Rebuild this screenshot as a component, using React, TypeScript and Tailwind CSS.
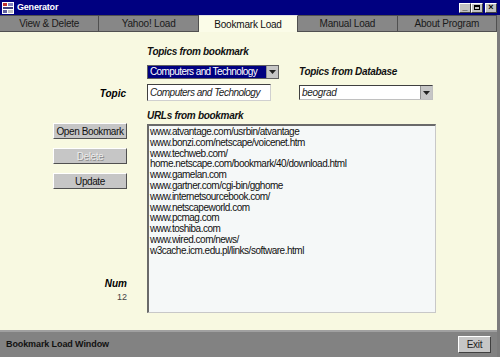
import React from "react";

const urls = [
  "www.atvantage.com/usrbin/atvantage",
  "www.bonzi.com/netscape/voicenet.htm",
  "www.techweb.com/",
  "home.netscape.com/bookmark/40/download.html",
  "www.gamelan.com",
  "www.gartner.com/cgi-bin/gghome",
  "www.internetsourcebook.com/",
  "www.netscapeworld.com",
  "www.pcmag.com",
  "www.toshiba.com",
  "www.wired.com/news/",
  "w3cache.icm.edu.pl/links/software.html",
];

const tabs = ["View & Delete", "Yahoo! Load", "Bookmark Load", "Manual Load", "About Program"];

function AppIcon() {
  return (
    <svg width="12" height="12" viewBox="0 0 12 12">
      <rect x="0" y="0" width="12" height="12" fill="#ffffff" />
      <rect x="1" y="1" width="4" height="3" fill="#c03030" />
      <rect x="6" y="1" width="5" height="3" fill="#8080c0" />
      <rect x="1" y="5" width="10" height="2" fill="#404080" />
      <rect x="1" y="8" width="4" height="3" fill="#6060a0" />
      <rect x="6" y="8" width="5" height="3" fill="#c0c0c0" />
    </svg>
  );
}

function WinButton({ children }: { children: React.ReactNode }) {
  return (
    <div className="w-[12px] h-[10px] bg-[#c0c0c0] border-t border-l border-white border-r border-b border-r-[#404040] border-b-[#404040] flex items-center justify-center text-[9px] leading-none font-bold text-black">
      {children}
    </div>
  );
}

function Button({ label, disabled }: { label: string; disabled?: boolean }) {
  return (
    <div
      className={`w-[74px] h-[16px] bg-[#c6c6c6] border border-t-white border-l-white border-r-[#505050] border-b-[#505050] flex items-center justify-center text-[10px] tracking-[-0.4px] whitespace-nowrap ${
        disabled ? "text-[#ececec] [text-shadow:1px_1px_0_#8a8a8a]" : "text-[#111]"
      }`}
    >
      {label}
    </div>
  );
}

function Arrow() {
  return (
    <div className="w-[12px] h-full bg-[#c6c6c6] border-l border-[#909090] flex items-center justify-center shrink-0">
      <svg width="7" height="4" viewBox="0 0 7 4">
        <path d="M0 0 L7 0 L3.5 4 Z" fill="#222" />
      </svg>
    </div>
  );
}

export default function App() {
  return (
    <div className="w-[500px] h-[357px] flex flex-col bg-[#f8f9e1] font-['Liberation_Sans',Arial,sans-serif] overflow-hidden">
      {/* Title bar */}
      <div className="h-[15px] bg-[#000080] flex items-center px-[2px] shrink-0">
        <AppIcon />
        <span className="ml-[3px] text-white text-[9px] font-bold leading-none tracking-[-0.2px]">Generator</span>
        <div className="ml-auto flex items-center mr-[1px]">
          <WinButton>_</WinButton>
          <WinButton>
            <span className="block w-[6px] h-[5px] border border-black border-t-2"></span>
          </WinButton>
          <div className="ml-[2px]">
            <WinButton>×</WinButton>
          </div>
        </div>
      </div>

      <div className="flex-1 flex flex-col border-r-[3px] border-[#7c7c7c]">
        {/* Tabs */}
        <div className="h-[17px] flex shrink-0 bg-[#808080]">
          {tabs.map((t) => (
            <div
              key={t}
              className={`flex-1 flex items-center justify-center text-[10px] tracking-[-0.2px] whitespace-nowrap border-t border-r border-[#505050] ${
                t === "Bookmark Load"
                  ? "bg-[#fbfce8] text-[#111] border-t-[#e0e0e0]"
                  : "bg-[#878787] text-[#1a1a1a] border-b"
              }`}
            >
              {t}
            </div>
          ))}
        </div>

        {/* Content */}
        <div className="flex-1 flex">
          {/* Left column */}
          <div className="w-[127px] flex flex-col items-end">
            <div className="mt-[56px] text-[10px] font-bold italic leading-[12px] mr-[1px]">Topic</div>
            <div className="mt-[23px] flex flex-col gap-[9px]">
              <Button label="Open Bookmark" />
              <Button label="Delete" disabled />
              <Button label="Update" />
            </div>
            <div className="mt-[89px] text-[10px] font-bold italic leading-[12px]">Num</div>
            <div className="mt-[1px] text-[9px] leading-[12px] text-[#444]">12</div>
          </div>

          {/* Middle */}
          <div className="ml-[20px] w-[289px] flex flex-col">
            <div className="flex">
              <div className="w-[132px] flex flex-col">
                <div className="mt-[14px] text-[10px] font-bold italic leading-[12px] tracking-[-0.3px] text-[#111] whitespace-nowrap">
                  Topics from bookmark
                </div>
                <div className="mt-[7px] h-[14px] flex border border-[#606060] bg-[#000080]">
                  <span className="flex-1 text-white text-[10px] leading-[12px] px-[2px] tracking-[-0.6px] whitespace-nowrap overflow-hidden">
                    Computers and Technology
                  </span>
                  <Arrow />
                </div>
                <div className="mt-[5px] h-[17px] w-[124px] border border-t-[#404040] border-l-[#404040] border-r-[#d0d0d0] border-b-[#d0d0d0] bg-white text-[10px] italic leading-[15px] px-[2px] tracking-[-0.5px] text-[#222] whitespace-nowrap overflow-hidden">
                  Computers and Technology
                </div>
              </div>
              <div className="ml-[20px] w-[134px] flex flex-col">
                <div className="mt-[34px] text-[10px] font-bold italic leading-[12px] tracking-[-0.3px] text-[#111] whitespace-nowrap">
                  Topics from Database
                </div>
                <div className="mt-[7px] h-[15px] flex border border-t-[#404040] border-l-[#404040] border-r-[#c0c0c0] border-b-[#c0c0c0] bg-white">
                  <span className="flex-1 text-[10px] italic leading-[13px] px-[2px] tracking-[-0.3px] text-[#222]">beograd</span>
                  <Arrow />
                </div>
              </div>
            </div>
            <div className="mt-[9px] text-[10px] font-bold italic leading-[12px] tracking-[-0.3px] text-[#111] whitespace-nowrap">
              URLs from bookmark
            </div>
            <div className="mt-[2px] h-[189px] w-[289px] border-t-2 border-l-2 border-[#6a6a6a] border-r border-b border-r-[#c8c8c8] border-b-[#c8c8c8] bg-[#f5f8f8] pt-[1px] pl-[1px]">
              {urls.map((u) => (
                <div key={u} className="text-[10px] leading-[10.8px] tracking-[-0.5px] text-[#111] whitespace-nowrap">
                  {u}
                </div>
              ))}
            </div>
          </div>
        </div>

        {/* Status bar */}
        <div className="h-[27px] shrink-0 bg-[#828282] border-t-2 border-[#a0a0a0] flex items-center px-[6px]">
          <span className="text-[9px] font-bold tracking-[-0.1px] text-[#111]">Bookmark Load Window</span>
          <div className="ml-auto w-[33px] h-[17px] bg-[#c6c6c6] border border-t-white border-l-white border-r-[#404040] border-b-[#404040] flex items-center justify-center text-[10px] tracking-[-0.3px] text-[#222]">
            Exit
          </div>
        </div>
      </div>
    </div>
  );
}
